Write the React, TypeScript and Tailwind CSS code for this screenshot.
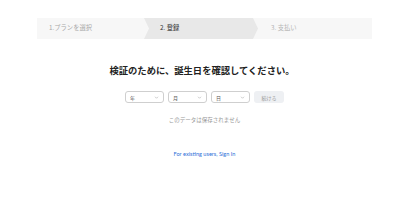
const jp = { fontFamily: '"Noto Sans CJK JP", "Noto Sans", sans-serif' };

function Chevron() {
  return (
    <svg width="5" height="5" viewBox="0 0 10 10" className="text-[#aaa]">
      <path d="M2 3.5 L5 6.5 L8 3.5" fill="none" stroke="currentColor" strokeWidth="1.2" />
    </svg>
  );
}

function DateSelect({ label }: { label: string }) {
  return (
    <div className="flex h-[12px] w-[39px] items-center justify-between rounded-[3px] border border-[#cfcfcf] bg-white pl-[4px] pr-[4px]">
      <span className="text-[5px] leading-none text-[#555]">{label}</span>
      <Chevron />
    </div>
  );
}

export default function App() {
  return (
    <div className="h-[215px] w-[400px] bg-white pl-[9px] pt-[18px]" style={jp}>
      {/* steps */}
      <div className="mx-auto flex h-[21px] w-[335px] bg-[#f7f7f7] text-[6.3px] leading-none">
        <div className="flex w-[107px] items-center pl-[12px] text-[#a8a8a8]">1.プランを選択</div>
        <div
          className="flex w-[114px] items-center bg-[#e8e8e8] pl-[16px] text-[#333]"
          style={{ clipPath: 'polygon(0 0, calc(100% - 5px) 0, 100% 50%, calc(100% - 5px) 100%, 0 100%, 5px 50%)' }}
        >
          2. 登録
        </div>
        <div className="flex flex-1 items-center pl-[13px] text-[#b4b4b4]">3. 支払い</div>
      </div>

      <h1 className="mt-[25px] pr-[5px] text-center text-[9.3px] font-bold leading-[12px] text-[#222]">
        検証のために、誕生日を確認してください。
      </h1>

      <div className="mt-[15px] flex items-center justify-center gap-[4px]">
        <DateSelect label="年" />
        <DateSelect label="月" />
        <DateSelect label="日" />
        <button className="flex h-[12px] w-[30px] items-center justify-center rounded-[3px] bg-[#eef0f3] text-[5px] leading-none text-[#999]">
          続ける
        </button>
      </div>

      <p className="mt-[13px] text-center text-[5.5px] leading-[8px] text-[#999]">このデータは保存されません</p>

      <p className="mt-[26px] text-center text-[5.6px] leading-[8px] text-[#2d6fd8]" style={{ fontFamily: '"Lato", sans-serif' }}>
        For existing users, Sign In
      </p>
    </div>
  );
}
